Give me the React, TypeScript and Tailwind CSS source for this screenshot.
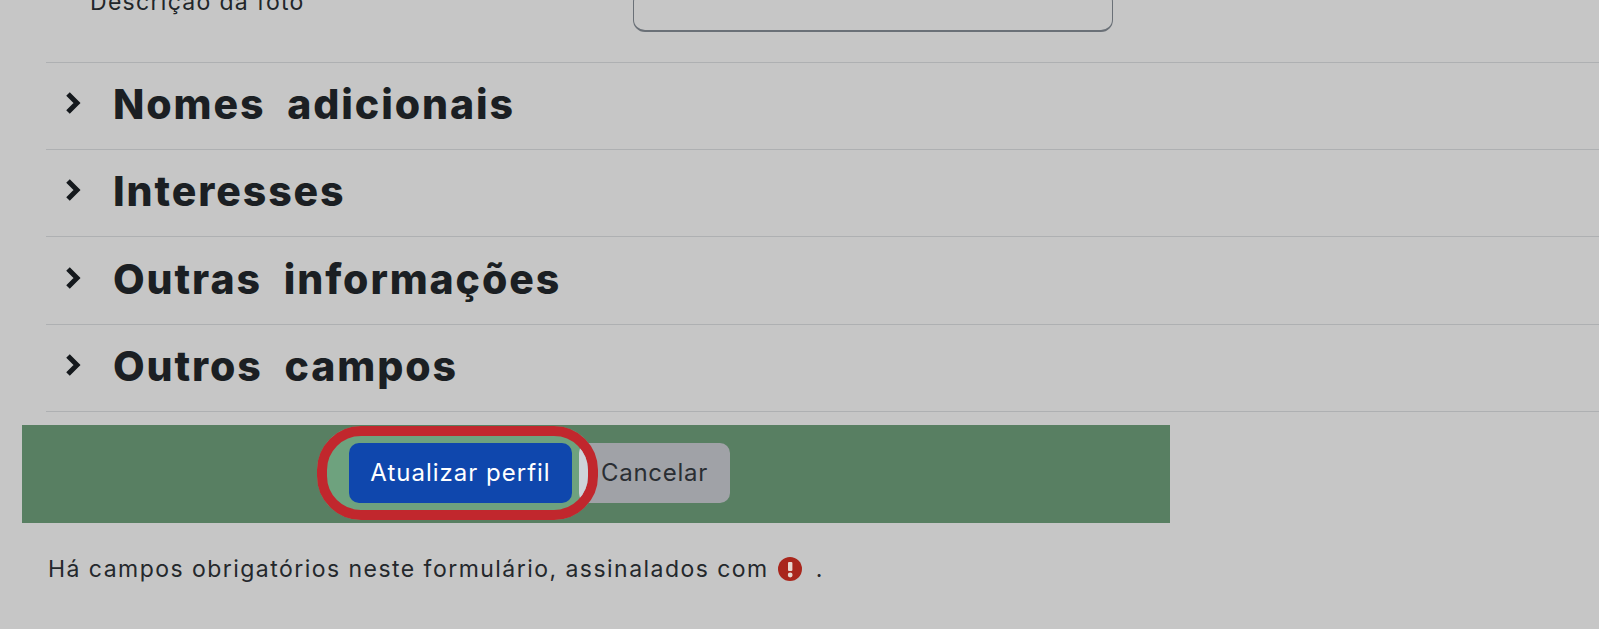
export default function App() {
  const rows = [
    { t: "Nomes adicionais", h: "h-[87px]" },
    { t: "Interesses", h: "h-[87px]" },
    { t: "Outras informações", h: "h-[88px]" },
    { t: "Outros campos", h: "h-[87px]" },
  ];
  return (
    <div className="h-[629px] w-[1599px] overflow-hidden bg-[#c6c6c6] font-['Inter','Liberation_Sans',sans-serif] text-[#1d2125]">
      <div className="flex h-[62px] items-start pl-[46px]">
        <div className="mt-[-11px] ml-[44px] w-[543px] text-[23px] leading-[26px] tracking-[1.3px] text-[#22262a]">Descrição da foto</div>
        <div className="mt-[-10px] h-[42px] w-[480px] rounded-[12px] border border-b-2 border-[#6a7077]" />
      </div>
      <div className="ml-[46px] border-t border-[#aeb0b2]">
        {rows.map((r) => (
          <div key={r.t} className={`box-border flex ${r.h} items-center border-b border-[#aeb0b2]`}>
            <svg width="20" height="26" viewBox="0 0 20 26" className="ml-[18px] mt-[-6px] shrink-0">
              <path d="M4 4 L13 13 L4 22" fill="none" stroke="#15191d" strokeWidth="5" strokeLinejoin="miter" />
            </svg>
            <h3 className="ml-[29px] mt-[-3px] text-[41px] leading-none font-extrabold tracking-[1.9px] [word-spacing:11px] text-[#1b1f23]">{r.t}</h3>
          </div>
        ))}
      </div>
      <div className="relative mt-[13px] ml-[22px] flex h-[98px] w-[1148px] items-start bg-[#587f62] pl-[327px] pt-[18px]">
        <div className="absolute left-[295px] top-[1px] h-[94px] w-[281px] rounded-[44px] bg-[#6ea27e]" />
        <button className="relative z-10 flex h-[60px] w-[223px] items-center justify-center rounded-[10px] bg-[#0f47ad] text-[24px] tracking-[1px] text-white">
          Atualizar perfil
        </button>
        <button className="relative ml-[7px] flex h-[60px] w-[151px] items-center justify-center rounded-[10px] bg-[#a0a2a7] text-[24px] tracking-[0.7px] text-[#2a2e33]">
          Cancelar
        </button>
        <div className="absolute left-[295px] top-[1px] z-20 h-[94px] w-[281px] overflow-hidden rounded-[44px] border-[10px] border-[#c1272d]">
          <div className="absolute left-[252px] top-[7px] h-[60px] w-[20px] rounded-l-[10px] bg-[#ced4da]" />
        </div>
      </div>
      <div className="mt-[31px] ml-[48px] flex items-center text-[23px] leading-[30px] tracking-[1.46px] text-[#24282c]">
        <span>Há campos obrigatórios neste formulário, assinalados com</span>
        <svg width="24" height="24" viewBox="0 0 24 24" className="ml-[9px] shrink-0">
          <circle cx="12" cy="12" r="12" fill="#a9261c" />
          <rect x="10" y="5" width="4.4" height="9" rx="1" fill="#e8d8d0" />
          <circle cx="12.2" cy="18" r="2.4" fill="#e8d8d0" />
        </svg>
        <span className="ml-[14px]">.</span>
      </div>
    </div>
  );
}
